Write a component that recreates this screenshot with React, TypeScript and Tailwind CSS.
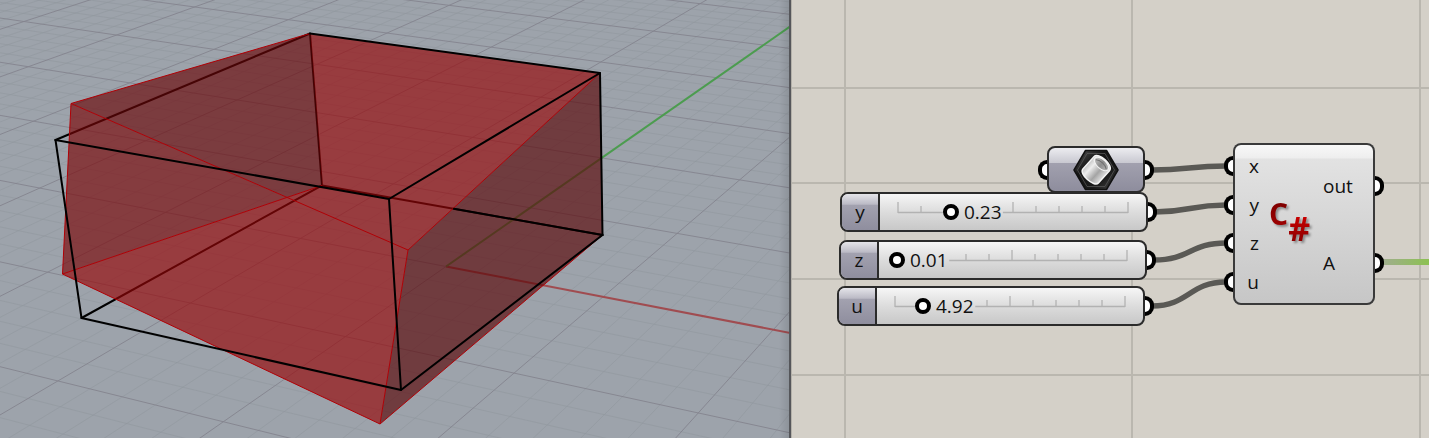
import React, { useState } from "react";

/* ---------- 3D viewport ---------- */

// Perspective projection of a ground plane point, in units of one major cell.
function project(x: number, y: number): [number, number] {
  const w = 1 - 0.0385 * x + 0.0885 * y;
  return [(446 + 133.9 * x + 131.1 * y) / w, (266.5 + 18.9 * x - 40.3 * y) / w];
}

function segment(x1: number, y1: number, x2: number, y2: number) {
  const [ax, ay] = project(x1, y1);
  const [bx, by] = project(x2, y2);
  return `M${ax.toFixed(1)} ${ay.toFixed(1)}L${bx.toFixed(1)} ${by.toFixed(1)}`;
}

function groundGrid() {
  let minor = "";
  let major = "";
  for (let i = -100; i <= 30; i++) {
    const d = segment(i / 5, -4, i / 5, 24);
    if (i % 5 !== 0) minor += d;
    else if (i !== 0) major += d;
  }
  for (let j = -20; j <= 60; j++) {
    const d = segment(-20, j / 5, 6, j / 5);
    if (j % 5 !== 0) minor += d;
    else if (j !== 0) major += d;
  }
  major += segment(-20, 0, 0, 0) + segment(0, -4, 0, 0);
  return { minor, major };
}

const GRID = groundGrid();
const X_AXIS = segment(0, 0, 4, 0);
const Y_AXIS = segment(0, 0, 0, 12);

function Viewport() {
  return (
    <section aria-label="Perspective viewport" className="relative overflow-hidden bg-[#9da3ab]">
      <svg
        className="absolute inset-0 h-full w-full"
        viewBox="0 0 789 438"
        preserveAspectRatio="xMidYMid slice"
        fill="none"
      >
        <path d={GRID.minor} stroke="#91979f" strokeWidth="1" opacity="0.6" />
        <path d={GRID.major} stroke="#84848e" strokeWidth="1" opacity="0.9" />
        <path d={X_AXIS} stroke="#a04c50" strokeWidth="2" />
        <path d={Y_AXIS} stroke="#4c9c4f" strokeWidth="2" />

        <g stroke="#000" strokeWidth="2" strokeLinecap="round">
          <path d="M310 33.5L55.5 140M310 33.5L322 185.5L81.5 318" />
          <path d="M322 185.5L602.5 235" />
        </g>

        <g fillOpacity="0.66">
          <path
            fill="#960608"
            d="M310 33.5L600 73L408 250L380 424L62.5 274L322 185.5Z"
          />
          <path fill="#6a0608" d="M310 33.5L71 103.5L287 197.5L322 185.5Z" />
          <path fill="#7a0608" d="M71 103.5L62.5 274L287 197.5Z" />
          <path fill="#590608" d="M600 73L408 250L380 424L602.5 235Z" />
        </g>

        <g stroke="#b00006" strokeWidth="1">
          <path d="M310 33.5L71 103.5L62.5 274L380 424L602.5 235" />
          <path d="M71 103.5L408 250L600 73M408 250L380 424" />
          <path d="M62.5 274L322 185.5" />
        </g>

        <g stroke="#000" strokeWidth="2" strokeLinejoin="round" strokeLinecap="round">
          <path d="M55.5 140L389 199L600 73L310 33.5" />
          <path d="M55.5 140L81.5 318L401 390L389 199" />
          <path d="M401 390L602.5 235L600 73" />
          <path d="M602.5 235L454 208.8" />
        </g>
      </svg>
      <div className="absolute inset-y-0 right-0 w-2.5 bg-linear-to-r from-black/0 to-black/10" />
    </section>
  );
}

/* ---------- node canvas ---------- */

function Grip({ side }: { side: "left" | "right" }) {
  return (
    <span
      className={
        side === "left"
          ? "absolute top-1/2 right-full h-5 w-[9px] -translate-y-1/2 rounded-l-full border-4 border-r-0 border-black bg-white"
          : "absolute top-1/2 left-full h-5 w-[9px] -translate-y-1/2 rounded-r-full border-4 border-l-0 border-black bg-white"
      }
    />
  );
}

const RAIL = 230;

function Ticks({ at }: { at: number }) {
  const gapStart = at - 8;
  const gapEnd = at + 52;
  const ticks = Array.from({ length: 11 }, (_, i) => i * 23).filter(
    (x) => x < gapStart || x > gapEnd,
  );
  return (
    <svg className="absolute top-2 left-4" width="234" height="12" viewBox="-2 0 234 12" stroke="#b2b2b2" fill="none">
      {gapStart > 0 && <path d={`M0 10.5H${gapStart}`} strokeWidth="1.5" />}
      <path d={`M${gapEnd} 10.5H${RAIL}`} strokeWidth="1.5" />
      {ticks.map((x) => (
        <path key={x} d={x % 115 === 0 ? `M${x} 0V11` : `M${x} 4V11`} strokeWidth="1.3" />
      ))}
    </svg>
  );
}

function NumberSlider({
  name,
  initial,
  max,
  place,
}: {
  name: string;
  initial: number;
  max: number;
  place: string;
}) {
  const [value, setValue] = useState(initial);
  const offset = (value / max) * RAIL;
  const id = `slider-${name}`;
  return (
    <div className={`absolute w-[308px] ${place}`}>
      <div className="flex h-10 overflow-hidden rounded-lg border-2 border-[#2b2b2b] bg-linear-to-b from-[#f6f6f6] via-[#dcdcdc] to-[#c8c8c8]">
        <label
          htmlFor={id}
          className="flex w-[38px] shrink-0 items-center justify-center border-r-2 border-[#2b2b2b] bg-[linear-gradient(#e4e4e9,#bcbbc6_28%,#a2a1af_32%,#8f8e9e)]"
        >
          {name}
        </label>
        <div className="relative flex flex-1 items-center px-2.5">
          <Ticks at={offset} />
          <input
            id={id}
            type="range"
            min={0}
            max={max}
            step={0.01}
            value={value}
            onChange={(e) => setValue(Number(e.target.value))}
            className="relative m-0 h-4 w-full cursor-pointer appearance-none bg-transparent [&::-webkit-slider-thumb]:size-4 [&::-webkit-slider-thumb]:appearance-none [&::-webkit-slider-thumb]:rounded-full [&::-webkit-slider-thumb]:border-4 [&::-webkit-slider-thumb]:border-black [&::-webkit-slider-thumb]:bg-white"
          />
          <output
            htmlFor={id}
            className="pointer-events-none absolute"
            style={{ left: `${Math.round(offset) + 31}px` }}
          >
            {value.toFixed(2)}
          </output>
        </div>
      </div>
      <Grip side="right" />
    </div>
  );
}

function PipeIcon() {
  return (
    <svg width="46" height="42" viewBox="0 0 46 42" aria-label="Geometry" role="img">
      <defs>
        <linearGradient id="hex" x1="0" y1="0" x2="1" y2="1">
          <stop offset="0" stopColor="#5a5a5a" />
          <stop offset="0.35" stopColor="#161616" />
          <stop offset="0.7" stopColor="#1c1c1c" />
          <stop offset="1" stopColor="#4a4a4a" />
        </linearGradient>
        <linearGradient id="tube" x1="0" y1="0" x2="1" y2="0">
          <stop offset="0" stopColor="#c4c4c4" />
          <stop offset="0.25" stopColor="#ededed" />
          <stop offset="0.65" stopColor="#a4a4a4" />
          <stop offset="1" stopColor="#e0e0e0" />
        </linearGradient>
        <linearGradient id="bore" x1="0" y1="0" x2="1" y2="0">
          <stop offset="0" stopColor="#c8c8c8" />
          <stop offset="0.5" stopColor="#8c8c8c" />
          <stop offset="1" stopColor="#b8b8b8" />
        </linearGradient>
      </defs>
      <path
        d="M12.5 1.5H33.5L45 21L33.5 40.5H12.5L1 21Z"
        fill="url(#hex)"
        stroke="#111"
        strokeWidth="1.5"
        strokeLinejoin="round"
      />
      <path
        d="M14 4.5H32L41.5 21L32 37.5H14L4.5 21Z"
        fill="none"
        stroke="#5c5c5c"
        strokeWidth="0.7"
        strokeLinejoin="round"
      />
      <g transform="rotate(42 23 21)">
        <path
          d="M12.500 12.500V29C12.500 35.500 33.500 35.500 33.500 29V12.500C33.500 5.500 12.500 5.500 12.500 12.500Z"
          fill="url(#tube)"
          stroke="#f4f4f4"
          strokeWidth="1.4"
        />
        <ellipse cx="23" cy="12.8" rx="8.8" ry="4.6" fill="url(#bore)" stroke="#f2f2f2" strokeWidth="1.2" />
        <path d="M16 13.500C19 10.500 27 10.500 30 13.500" stroke="#6e6e6e" strokeWidth="1" fill="none" />
      </g>
    </svg>
  );
}

function GeometryParam() {
  return (
    <div className="absolute top-[146px] left-[255px] w-[98px]">
      <div className="flex h-[47px] items-center justify-center rounded-lg border-2 border-[#2b2b2b] bg-[linear-gradient(#ececf0,#c9c9d1_34%,#a1a0ae_36%,#8e8d9d)]">
        <PipeIcon />
      </div>
      <Grip side="left" />
      <Grip side="right" />
    </div>
  );
}

function ScriptComponent() {
  return (
    <div className="absolute top-[143px] left-[441px] flex h-[162px] w-[142px] rounded-lg bg-[linear-gradient(#fafafa,#eeeeee_9%,#e2e2e2_10%,#c6c6c6)] py-1 ring-2 ring-[#3a3a3a] ring-inset">
      <ul className="flex w-[26px] flex-col">
        {["x", "y", "z", "u"].map((n) => (
          <li key={n} className="relative flex flex-1 items-center justify-end">
            <Grip side="left" />
            {n}
          </li>
        ))}
      </ul>
      <div
        aria-label="C# script"
        className="flex flex-1 items-center pl-2.5 font-bold drop-shadow-[2px_2px_1px_rgba(0,0,0,0.35)]"
      >
        <span className="bg-linear-to-b from-[#780000] to-[#c00000] bg-clip-text pb-5 text-[30px] leading-8 text-transparent">
          C
        </span>
        <span className="bg-linear-to-b from-[#f00000] to-[#800000] bg-clip-text pt-2 text-[34px] leading-9 text-transparent">
          #
        </span>
      </div>
      <ul className="flex w-[52px] flex-col">
        {["out", "A"].map((n) => (
          <li key={n} className="relative flex flex-1 items-center">
            {n}
            <Grip side="right" />
          </li>
        ))}
      </ul>
    </div>
  );
}

function Wires() {
  return (
    <svg className="absolute inset-0 h-full w-full" fill="none">
      <defs>
        <linearGradient id="preview" gradientUnits="userSpaceOnUse" x1="590" y1="0" x2="637" y2="0">
          <stop offset="0" stopColor="#a0ad8e" />
          <stop offset="1" stopColor="#8cc152" />
        </linearGradient>
      </defs>
      <g stroke="#bab7af" strokeWidth="2">
        <path d="M53 0V2000M340 0V2000M628 0V2000" />
        <path d="M0 88H3000M0 183H3000M0 279H3000M0 375H3000" />
      </g>
      <g stroke="#5a5955" strokeWidth="5.500">
        <path d="M360 170C396 170 398 166 434 166" />
        <path d="M362 212C398 212 398 205 434 205" />
        <path d="M362 260C398 260 398 243 434 243" />
        <path d="M360 306C397 306 397 282 434 282" />
      </g>
      <rect x="590" y="259" width="100%" height="6" fill="url(#preview)" />
    </svg>
  );
}

function NodeCanvas() {
  return (
    <section
      aria-label="Node canvas"
      className="relative overflow-hidden bg-[#d4d0c8] font-['Open_Sans','Noto_Sans',sans-serif] text-[19px] leading-6 text-[#111]"
    >
      <Wires />
      <GeometryParam />
      <NumberSlider name="y" initial={0.23} max={1} place="top-[192px] left-[48px]" />
      <NumberSlider name="z" initial={0.01} max={10} place="top-[240px] left-[47px]" />
      <NumberSlider name="u" initial={4.92} max={40} place="top-[286px] left-[45px]" />
      <ScriptComponent />
    </section>
  );
}

export default function App() {
  return (
    <main className="grid min-h-screen grid-cols-[789fr_3px_637fr]">
      <Viewport />
      <div className="border-l-2 border-[#55565a] bg-[#b4b1aa]" />
      <NodeCanvas />
    </main>
  );
}
